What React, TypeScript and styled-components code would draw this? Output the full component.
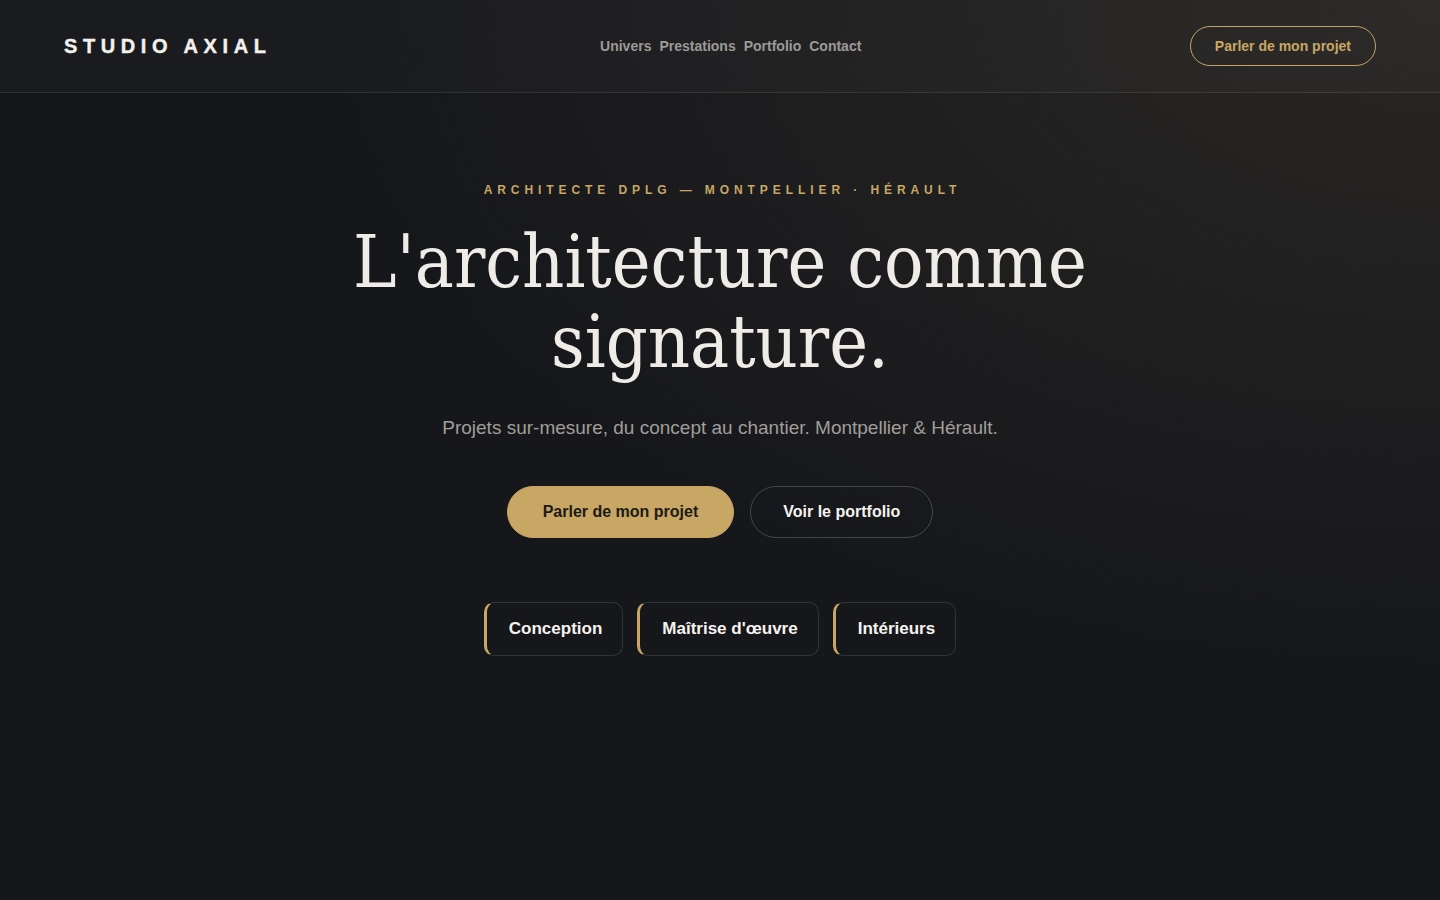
import React from "react";
import styled, { createGlobalStyle } from "styled-components";

const GlobalStyle = createGlobalStyle`
  * { box-sizing: border-box; }
  html, body {
    margin: 0;
    padding: 0;
    background: #16171b;
  }
  body {
    font-family: "Liberation Sans", Arial, sans-serif;
    color: #efebe6;
  }
`;

const Page = styled.div`
  min-height: 900px;
  background:
    radial-gradient(ellipse 1500px 900px at 100% 0%, rgba(210, 180, 120, 0.1), rgba(210, 180, 120, 0) 75%),
    #16171b;
`;

const Header = styled.header`
  height: 93px;
  display: flex;
  justify-content: space-between;
  align-items: center;
  padding: 0 64px;
  border-bottom: 1px solid rgba(255, 255, 255, 0.09);
  background: rgba(255, 255, 255, 0.02);
`;

const Logo = styled.div`
  font-size: 20px;
  font-weight: 900;
  letter-spacing: 0.28em;
  color: #f4f1ec;
  -webkit-text-stroke: 0.4px #f4f1ec;
`;

const Nav = styled.nav`
  display: flex;
  gap: 8px;
  a {
    color: #9c9a96;
    font-size: 14px;
    font-weight: 700;
    text-decoration: none;
  }
`;

const GhostGold = styled.a`
  display: inline-flex;
  align-items: center;
  justify-content: center;
  height: 40px;
  padding: 0 24px;
  border: 1px solid #c4a464;
  border-radius: 999px;
  color: #c8a664;
  font-size: 14px;
  font-weight: 700;
  text-decoration: none;
`;

const Hero = styled.section`
  display: flex;
  flex-direction: column;
  align-items: center;
  text-align: center;
  padding-top: 90px;
`;

const Eyebrow = styled.div`
  font-size: 12px;
  font-weight: 700;
  letter-spacing: 0.41em;
  color: #c8a664;
  margin-left: 0.41em;
`;

const Title = styled.h1`
  margin: 25px 0 0;
  font-family: "DejaVu Serif Condensed", "DejaVu Serif", Georgia, serif;
  font-stretch: condensed;
  font-weight: 400;
  font-size: 73px;
  line-height: 80px;
  color: #efebe6;
  max-width: 900px;
`;

const Lead = styled.p`
  margin: 35px 0 0;
  font-size: 19px;
  color: #a19e99;
`;

const Actions = styled.div`
  display: flex;
  gap: 16px;
  margin-top: 47px;
`;

const Button = styled.a<{ $primary?: boolean }>`
  display: inline-flex;
  align-items: center;
  justify-content: center;
  height: 52px;
  padding: 0 ${(p) => (p.$primary ? "35px" : "32px")};
  border-radius: 999px;
  font-size: 16px;
  font-weight: 700;
  text-decoration: none;
  background: ${(p) => (p.$primary ? "#c8a664" : "transparent")};
  color: ${(p) => (p.$primary ? "#1c1a17" : "#f6f3ef")};
  border: 1px solid ${(p) => (p.$primary ? "#c8a664" : "rgba(255,255,255,0.2)")};
`;

const Chips = styled.div`
  display: flex;
  gap: 14px;
  margin-top: 64px;
`;

const Chip = styled.div`
  height: 54px;
  display: flex;
  align-items: center;
  padding: 0 20px 0 22px;
  border: 1px solid rgba(255, 255, 255, 0.12);
  border-left: 3px solid #c8a664;
  border-radius: 10px;
  font-size: 17px;
  font-weight: 700;
  color: #f6f3ef;
`;

export default function App() {
  return (
    <>
      <GlobalStyle />
      <Page>
        <Header>
          <Logo>STUDIO AXIAL</Logo>
          <Nav>
            <a href="#univers">Univers</a>
            <a href="#prestations">Prestations</a>
            <a href="#portfolio">Portfolio</a>
            <a href="#contact">Contact</a>
          </Nav>
          <GhostGold href="#contact">Parler de mon projet</GhostGold>
        </Header>
        <Hero>
          <Eyebrow>ARCHITECTE DPLG — MONTPELLIER · HÉRAULT</Eyebrow>
          <Title>L'architecture comme signature.</Title>
          <Lead>Projets sur-mesure, du concept au chantier. Montpellier &amp; Hérault.</Lead>
          <Actions>
            <Button $primary href="#contact">Parler de mon projet</Button>
            <Button href="#portfolio">Voir le portfolio</Button>
          </Actions>
          <Chips>
            <Chip>Conception</Chip>
            <Chip>Maîtrise d'œuvre</Chip>
            <Chip>Intérieurs</Chip>
          </Chips>
        </Hero>
      </Page>
    </>
  );
}
